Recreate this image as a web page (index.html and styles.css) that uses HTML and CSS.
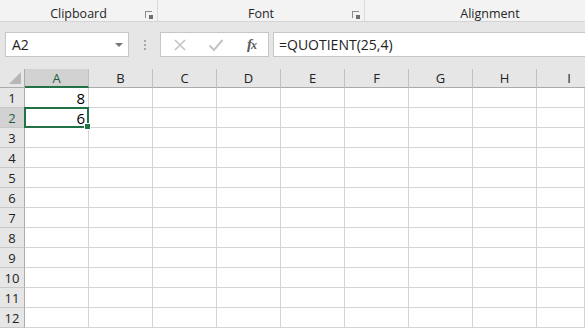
FILE: index.html
```html
<!DOCTYPE html>
<html lang="en">
<head>
    <meta charset="UTF-8">
    <title>QUOTIENT</title>
    <link rel="stylesheet" href="styles.css">
</head>
<body>
    <div class="ribbon">
        <div class="group group-clip">
            <span>Clipboard</span>
            <span class="launcher"></span>
        </div>
        <div class="group group-font">
            <span>Font</span>
            <span class="launcher"></span>
        </div>
        <div class="group group-align">
            <span>Alignment</span>
        </div>
    </div>

    <div class="formula-row">
        <div class="name-box">
            <span>A2</span>
            <span class="caret"></span>
        </div>
        <div class="grip"><i></i><i></i><i></i></div>
        <div class="fx-buttons">
            <svg class="btn-x" width="14" height="14" viewBox="0 0 14 14">
                <path d="M2 2 L12 12 M12 2 L2 12" stroke="#c4c4c4" stroke-width="1.6" fill="none"/>
            </svg>
            <svg class="btn-ok" width="16" height="14" viewBox="0 0 16 14">
                <path d="M1.5 7.5 L6 12 L14.5 2" stroke="#c4c4c4" stroke-width="2" fill="none"/>
            </svg>
            <span class="fx"><i>f</i><i>x</i></span>
        </div>
        <div class="formula-input">=QUOTIENT(25,4)</div>
    </div>

    <div class="sheet">
        <div class="corner"><span></span></div>
        <div class="col-head active">A</div>
        <div class="col-head">B</div>
        <div class="col-head">C</div>
        <div class="col-head">D</div>
        <div class="col-head">E</div>
        <div class="col-head">F</div>
        <div class="col-head">G</div>
        <div class="col-head">H</div>
        <div class="col-head last">I</div>

        <div class="row-head">1</div>
        <div class="cell num">8</div>
        <div class="cell"></div><div class="cell"></div><div class="cell"></div><div class="cell"></div>
        <div class="cell"></div><div class="cell"></div><div class="cell"></div><div class="cell"></div>

        <div class="row-head active">2</div>
        <div class="cell num selected">6<span class="handle"></span></div>
        <div class="cell"></div><div class="cell"></div><div class="cell"></div><div class="cell"></div>
        <div class="cell"></div><div class="cell"></div><div class="cell"></div><div class="cell"></div>
    </div>
    <script>
        // fill the empty rows 3..12
        var sheet = document.querySelector('.sheet');
        for (var r = 3; r <= 12; r++) {
            var head = document.createElement('div');
            head.className = 'row-head';
            head.textContent = r;
            sheet.appendChild(head);
            for (var c = 0; c < 9; c++) {
                var cell = document.createElement('div');
                cell.className = 'cell';
                sheet.appendChild(cell);
            }
        }
    </script>
</body>
</html>
```

FILE: styles.css
```css
html, body {
    margin: 0;
    width: 585px;
    height: 329px;
    overflow: hidden;
    background: #ffffff;
    font-family: "Open Sans", "Noto Sans", sans-serif;
}
.ribbon {
    display: flex;
    height: 21px;
    background: #f3f3f3;
    border-bottom: 1px solid #d4d4d4;
    font-size: 12.5px;
    color: #262626;
}
.group {
    position: relative;
    flex-shrink: 0;
    display: flex;
    align-items: center;
    justify-content: center;
    padding-top: 5px;
    box-sizing: border-box;
}
.group-clip {
    width: 158px;
    border-right: 1px solid #dadada;
}
.group-font {
    width: 207px;
    border-right: 1px solid #dadada;
}
.group-align {
    width: 220px;
    padding-left: 30px;
}
.launcher {
    position: absolute;
    right: 5px;
    top: 11px;
    width: 6px;
    height: 6px;
    border-left: 1px solid #8a8a8a;
    border-top: 1px solid #8a8a8a;
}
.launcher::after {
    content: "";
    position: absolute;
    right: -1px;
    bottom: -1px;
    width: 4px;
    height: 4px;
    background: #6e6e6e;
}
.formula-row {
    display: flex;
    align-items: center;
    height: 46px;
    padding: 0 0 1px 5px;
    background: #e6e6e6;
    box-sizing: border-box;
}
.name-box {
    position: relative;
    display: flex;
    align-items: center;
    width: 124px;
    height: 25px;
    box-sizing: border-box;
    background: #fff;
    border: 1px solid #c6c6c6;
    padding-left: 6px;
    font-size: 14px;
    color: #222;
}
.caret {
    position: absolute;
    right: 5px;
    top: 10px;
    border-left: 4px solid transparent;
    border-right: 4px solid transparent;
    border-top: 4px solid #777;
}
.grip {
    display: flex;
    flex-direction: column;
    gap: 2px;
    width: 31px;
    align-items: center;
}
.grip i {
    width: 2px;
    height: 2px;
    background: #a8a8a8;
}
.fx-buttons {
    display: flex;
    align-items: center;
    width: 109px;
    height: 25px;
    box-sizing: border-box;
    background: #fff;
    border: 1px solid #c6c6c6;
    padding-left: 12px;
}
.btn-ok {
    margin-left: 21px;
}
.fx {
    margin-left: 23px;
    font-family: "Liberation Serif", serif;
    font-style: italic;
    font-weight: bold;
    font-size: 15px;
    color: #5a5a5a;
    letter-spacing: -1px;
}
.fx i:last-child {
    font-size: 12px;
}
.formula-input {
    display: flex;
    align-items: center;
    margin-left: 4px;
    flex: 1;
    height: 25px;
    box-sizing: border-box;
    background: #fff;
    border: 1px solid #c6c6c6;
    border-right: none;
    padding-left: 5px;
    font-size: 14px;
    color: #222;
}
.sheet {
    display: grid;
    grid-template-columns: 25px repeat(8, 64px) 48px;
    grid-template-rows: 19px;
    grid-auto-rows: 20px;
    background: #e6e6e6;
    padding-top: 1px;
}
.sheet > div {
    box-sizing: border-box;
}
.corner {
    position: relative;
    border-right: 1px solid #ababab;
    border-bottom: 1px solid #ababab;
}
.corner span {
    position: absolute;
    right: 3px;
    bottom: 3px;
    width: 12px;
    height: 12px;
    background: #b7b7b7;
    clip-path: polygon(100% 0, 100% 100%, 0 100%);
}
.col-head {
    display: flex;
    align-items: center;
    justify-content: center;
    border-right: 1px solid #c0c0c0;
    border-bottom: 1px solid #ababab;
    font-size: 13px;
    color: #222;
    background: #e6e6e6;
}
.col-head.last {
    border-right: none;
    padding-left: 16px;
}
.col-head.active {
    background: #d2d2d2;
    border-bottom: 2px solid #217346;
    color: #1e5e3a;
    padding-top: 1px;
}
.row-head {
    display: flex;
    align-items: center;
    justify-content: center;
    border-right: 1px solid #ababab;
    border-bottom: 1px solid #c8c8c8;
    font-size: 13px;
    color: #222;
    background: #e6e6e6;
}
.row-head.active {
    background: #d2d2d2;
    color: #1e5e3a;
}
.cell {
    background: #fff;
    border-right: 1px solid #d4d4d4;
    border-bottom: 1px solid #d4d4d4;
    font-size: 15px;
    color: #000;
}
.cell.num {
    display: flex;
    align-items: center;
    justify-content: flex-end;
    padding-right: 3px;
}
.cell.selected {
    position: relative;
    border: 2px solid #217346;
    margin: -1px 0 0 -1px;
    padding-right: 2px;
}
.handle {
    position: absolute;
    right: -4px;
    bottom: -4px;
    width: 5px;
    height: 5px;
    background: #217346;
    border: 1px solid #fff;
}
```
